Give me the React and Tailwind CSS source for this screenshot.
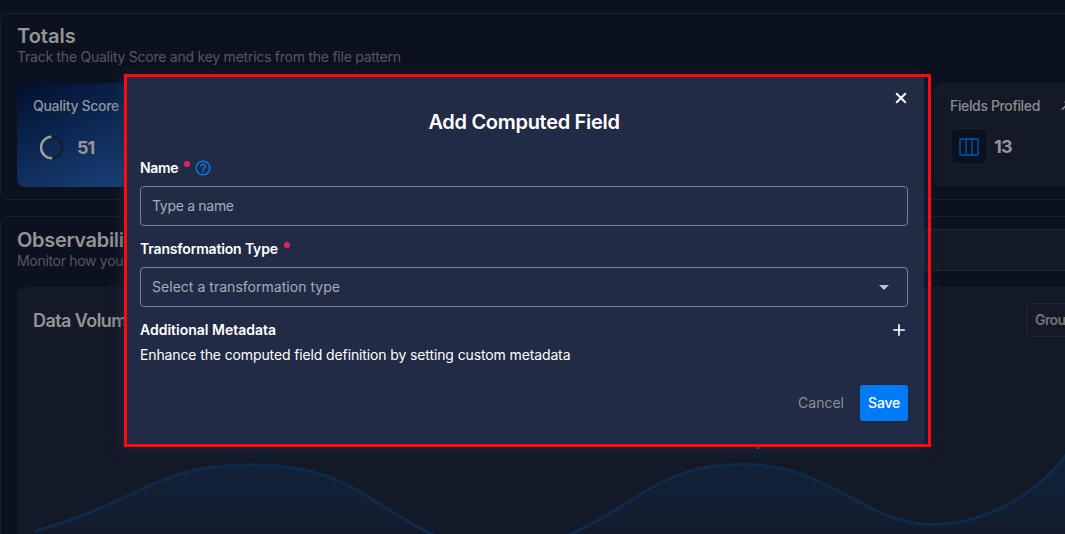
import React from "react";
import { MdHelpOutline, MdAdd } from "react-icons/md";

function SectionTitle({ title, caption, captionClass }) {
  return (
    <div className="whitespace-nowrap">
      <h2 className="text-xl leading-6 font-semibold text-[#969595]">{title}</h2>
      <p className={"-mt-px text-sm leading-5 text-[#56585f] " + captionClass}>{caption}</p>
    </div>
  );
}

function Totals() {
  return (
    <section className="h-[187px] w-[1100px] shrink-0 rounded-lg border border-[#1a1f2e] px-4 pt-[10px]">
      <SectionTitle
        title="Totals"
        caption="Track the Quality Score and key metrics from the file pattern"
        captionClass="tracking-[-0.245px]"
      />
      <div className="mt-4 flex justify-between">
        <div className="h-[104px] w-[213px] rounded-lg bg-[linear-gradient(155deg,#020f2c_0%,#0a234c_30%,#1a3f78_75%,#1f488a_100%)] pt-[13px] pl-4">
          <div className="text-sm leading-5 font-medium tracking-[-0.306px] text-[#8f959f]">Quality Score</div>
          <div className="mt-[19px] flex items-center pl-[6px]">
            <svg width="25" height="25" viewBox="0 0 25 25" fill="none" strokeWidth="2.5">
              <circle cx="12.5" cy="12.5" r="10.8" stroke="#161c2c" />
              <path d="M12.5 1.7a10.8 10.8 0 0 0 0.7 21.6" stroke="#9d9c9b" />
            </svg>
            <span className="ml-[13px] text-lg leading-6 font-bold tracking-[-0.9px] text-[#969595]">51</span>
          </div>
        </div>
        <div className="mr-[-41px] h-[104px] w-[190px] rounded-lg bg-[#141927] pt-[13px] pl-4">
          <div className="flex items-center">
            <span className="w-[111px] text-sm leading-5 font-medium tracking-[-0.359px] text-[#8b8c8f]">Fields Profiled</span>
            <svg width="10" height="10" viewBox="0 0 10 10" fill="none" stroke="#8b8c8f" strokeWidth="1.6">
              <path d="M0.8 8.8 8.5 1M3.5 1h5v5" />
            </svg>
          </div>
          <div className="mt-3 flex items-center">
            <div className="flex h-[37px] w-[38px] items-center justify-center rounded-lg border border-[#1c2130] bg-[#0c111f]">
              <svg width="20" height="18" viewBox="0 0 20 18" fill="none" stroke="#04488f" strokeWidth="1.8">
                <rect x="1" y="1" width="18" height="16" rx="1" />
                <path d="M7 1v16M13 1v16" />
              </svg>
            </div>
            <span className="ml-[6px] text-lg leading-6 font-bold tracking-[-0.7px] text-[#969595]">13</span>
          </div>
        </div>
      </div>
    </section>
  );
}

function VolumeChart() {
  return (
    <svg className="block" width="1048" height="80" viewBox="17 454 1048 80" fill="none">
      <defs>
        <linearGradient id="volume" x1="0" y1="456" x2="0" y2="560" gradientUnits="userSpaceOnUse">
          <stop offset="0" stopColor="#11223a" />
          <stop offset="1" stopColor="#131a29" />
        </linearGradient>
      </defs>
      <path
        d="M35 531C85 517 107 505 133 493C165 479 190 464.7 252 464.7C345 464.7 365 502 430 533C480 555 525 555 573 533C640 503 660 464.3 743 464.3C830 464.3 865 524.5 932 524.5C990 524.5 1040 490 1066 455V560H35Z"
        fill="url(#volume)"
      />
      <path
        d="M35 531C85 517 107 505 133 493C165 479 190 464.7 252 464.7C345 464.7 365 502 430 533C480 555 525 555 573 533C640 503 660 464.3 743 464.3C830 464.3 865 524.5 932 524.5C990 524.5 1040 490 1066 455"
        stroke="#0e2a4d"
        strokeWidth="3"
      />
    </svg>
  );
}

function Observability() {
  return (
    <section className="mt-4 h-[340px] w-[1100px] shrink-0 rounded-t-lg border border-[#1a1f2e] pt-3 pl-4">
      <div className="flex h-[42px] justify-between">
        <div className="-mt-px">
          <SectionTitle
            title={<span className="tracking-[-0.316px]">Observability</span>}
            caption="Monitor how your data evolves"
            captionClass="tracking-[-0.309px]"
          />
        </div>
        <div className="w-[400px] border border-[#222733] bg-[#141927]" />
      </div>
      <div className="mt-4 h-[260px] rounded-tl-lg bg-[#141927] pt-4">
        <div className="flex h-[34px] items-center">
          <h3 className="w-[1009px] shrink-0 pt-px pl-4 text-lg font-semibold tracking-[-0.567px] text-[#969595]">Data Volume</h3>
          <button className="h-[34px] shrink-0 rounded border border-[#222733] px-2 text-sm font-semibold tracking-[-0.6px] text-[#727479]">
            Group by
          </button>
        </div>
        <div className="mt-[117px]">
          <VolumeChart />
        </div>
      </div>
    </section>
  );
}

function Required() {
  return <span className="mb-2 ml-[6px] size-[6px] rounded-full bg-[#e91e63]" />;
}

function ComputedFieldDialog() {
  return (
    <div className="absolute top-[75px] left-[124px] flex h-[369px] w-[800px] flex-col rounded bg-[#222b45] px-4 text-white shadow-[0_4px_14px_3px_rgba(32,52,84,0.5)]">
      <button className="mt-[14px] mr-[-2px] flex size-[18px] items-center justify-center self-end">
        <svg width="12" height="12" viewBox="0 0 12 12" fill="none" stroke="currentColor" strokeWidth="2">
          <path d="M1.2 1.2l9.6 9.6M10.8 1.2l-9.6 9.6" />
        </svg>
      </button>
      <h1 className="mt-[3px] text-center text-xl leading-6 font-semibold tracking-[-0.3px]">Add Computed Field</h1>

      <label className="mt-6 flex h-5 items-center text-sm leading-5 font-semibold">
        <span className="tracking-[-0.35px]">Name</span>
        <Required />
        <MdHelpOutline size={18} className="ml-1 text-[#0379ef]" />
      </label>
      <div className="mt-2 flex h-10 shrink-0 items-center rounded border border-[#7f8087] px-[11px] text-sm tracking-[-0.306px] text-[#a9acb6]">
        Type a name
      </div>

      <label className="mt-[13px] flex h-5 items-center text-sm leading-5 font-semibold">
        <span className="tracking-[-0.166px]">Transformation Type</span>
        <Required />
      </label>
      <div className="mt-2 flex h-10 shrink-0 items-center justify-between rounded border border-[#7f8087] pr-[18px] pl-[11px] text-sm tracking-[0.03px] text-[#a9acb6]">
        Select a transformation type
        <svg width="10" height="5" viewBox="0 0 10 5" fill="#bdbfc7">
          <path d="M0 0h10L5 5z" />
        </svg>
      </div>

      <div className="mt-[13px] flex h-5 items-center justify-between text-sm leading-5 font-semibold">
        <span>Additional Metadata</span>
        <MdAdd size={20} className="mr-[-1px]" />
      </div>
      <p className="mt-[5px] text-sm leading-5 tracking-[-0.122px]">
        Enhance the computed field definition by setting custom metadata
      </p>

      <div className="mt-5 flex h-9 shrink-0 justify-end text-sm">
        <button className="mr-4 text-[#8e9097]">Cancel</button>
        <button className="w-12 rounded-[3px] bg-[#007bf5] font-medium tracking-[-0.25px] text-white">Save</button>
      </div>
    </div>
  );
}

export default function App() {
  return (
    <div className="relative flex h-[534px] w-full flex-col overflow-hidden bg-[#0c111f] pt-[13px] font-['Inter',sans-serif]">
      <Totals />
      <Observability />
      <span className="absolute top-[446px] left-[757px] h-[3px] w-[2px] bg-[#66686e]" />
      <ComputedFieldDialog />
      <div className="pointer-events-none absolute top-[74px] left-[124px] h-[373px] w-[807px] border-[3px] border-[#ff0a0a]" />
    </div>
  );
}
